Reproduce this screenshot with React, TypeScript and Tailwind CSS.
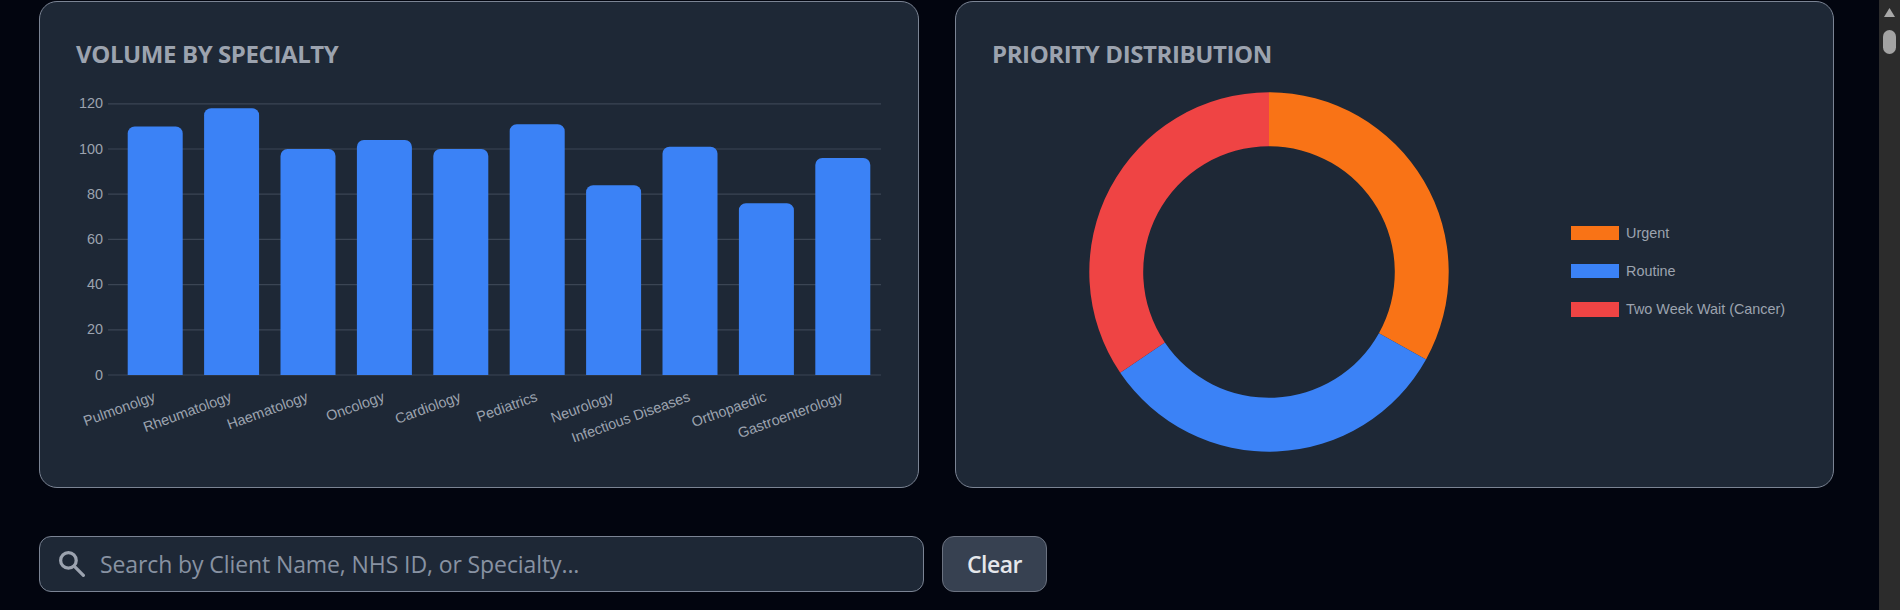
const bars = [
  { name: 'Pulmonolgy', value: 110 },
  { name: 'Rheumatology', value: 118 },
  { name: 'Haematology', value: 100 },
  { name: 'Oncology', value: 104 },
  { name: 'Cardiology', value: 100 },
  { name: 'Pediatrics', value: 111 },
  { name: 'Neurology', value: 84 },
  { name: 'Infectious Diseases', value: 101 },
  { name: 'Orthopaedic', value: 76 },
  { name: 'Gastroenterology', value: 96 },
];

const ticks = [0, 20, 40, 60, 80, 100, 120];

// coordinates inside the canvas-like svg, origin at the card's content box
const plotLeft = 41;
const plotRight = 805;
const plotBottom = 303;
const unit = 2.26;
const step = (plotRight - plotLeft) / bars.length;
const barWidth = 55;

function BarChart() {
  return (
    <svg width={810} height={370} className="block" style={{ fontFamily: '"Liberation Sans", Arial, sans-serif' }}>
      {ticks.map(t => {
        const y = plotBottom - t * unit;
        return (
          <g key={t}>
            <line x1={32} x2={plotRight} y1={y} y2={y} stroke="#3b4554" strokeWidth={1.2} />
            <text x={27} y={y + 4.5} textAnchor="end" fontSize={14.4} fill="#9ca3af">{t}</text>
          </g>
        );
      })}
      {bars.map((b, i) => {
        const cx = plotLeft + step * (i + 0.5);
        const x = cx - barWidth / 2;
        const top = plotBottom - b.value * unit;
        return (
          <g key={b.name}>
            <path
              d={`M${x} ${plotBottom}V${top + 7}a7 7 0 0 1 7 -7H${x + barWidth - 7}a7 7 0 0 1 7 7V${plotBottom}Z`}
              fill="#3b82f6"
            />
            <text
              textAnchor="end"
              fontSize={14.4}
              fill="#9ca3af"
              transform={`translate(${cx + 1} 328.5) rotate(-20)`}
            >
              {b.name}
            </text>
          </g>
        );
      })}
    </svg>
  );
}

function arc(start: number, end: number) {
  const R = 179.7;
  const r = 125.8;
  const c = 180;
  const pt = (rad: number, deg: number) => {
    const a = (deg * Math.PI) / 180;
    return `${(c + rad * Math.sin(a)).toFixed(2)} ${(c - rad * Math.cos(a)).toFixed(2)}`;
  };
  return `M${pt(R, start)}A${R} ${R} 0 0 1 ${pt(R, end)}L${pt(r, end)}A${r} ${r} 0 0 0 ${pt(r, start)}Z`;
}

const slices = [
  { label: 'Urgent', color: '#f97316', from: 0, to: 119.1 },
  { label: 'Routine', color: '#3b82f6', from: 119.1, to: 235.9 },
  { label: 'Two Week Wait (Cancer)', color: '#ef4444', from: 235.9, to: 360 },
];

function Card({ title, children }: { title: string; children: React.ReactNode }) {
  return (
    <div className="h-[487px] rounded-[18px] border border-[#7b8494] bg-[#1e2836] px-[36px] pt-[35px]">
      <h3 className="text-[24px] leading-[33px] font-bold uppercase tracking-[-0.4px] text-[#9ca3af]" style={{ fontFamily: '"Open Sans", sans-serif' }}>
        {title}
      </h3>
      {children}
    </div>
  );
}

export default function App() {
  return (
    <div className="flex h-screen overflow-hidden bg-[#02050f]" style={{ fontFamily: '"Open Sans", sans-serif' }}>
      <main className="min-w-0 flex-1 pt-px pl-[39px]">
        <div className="grid grid-cols-[880px_879px] gap-[36px]">
          <Card title="Volume by Specialty">
            <div className="mt-[2px]">
              <BarChart />
            </div>
          </Card>
          <Card title="Priority Distribution">
            <div className="-ml-[0.5px] flex items-start">
              <svg width={360} height={360} className="mt-[22px] ml-[97.7px] shrink-0">
                {slices.map(s => (
                  <path key={s.label} d={arc(s.from, s.to)} fill={s.color} />
                ))}
              </svg>
              <ul className="mt-[155.6px] ml-[121.8px] flex flex-col gap-[24px]" style={{ fontFamily: '"Liberation Sans", Arial, sans-serif' }}>
                {slices.map(s => (
                  <li key={s.label} className="flex h-[14.4px] items-center gap-[7px] text-[14.4px] leading-none whitespace-nowrap text-[#9ca3af]">
                    <span className="h-[14.4px] w-[48px] shrink-0" style={{ backgroundColor: s.color }} />
                    {s.label}
                  </li>
                ))}
              </ul>
            </div>
          </Card>
        </div>
        <div className="mt-[48px] flex items-stretch gap-[18px]">
          <div className="flex h-[56px] w-[885px] items-center rounded-[12px] border border-[#7b8494] bg-[#1e2836] pl-[19px]">
            <svg width={26} height={26} viewBox="0 0 24 24" fill="none" stroke="#9ca3af" strokeWidth={3} strokeLinecap="round" className="shrink-0">
              <circle cx="8.7" cy="8.7" r="7.2" />
              <line x1="14" y1="14" x2="22.5" y2="22.5" />
            </svg>
            <span className="ml-[15px] text-[23px] tracking-[-0.1px] text-[#8892a2]">Search by Client Name, NHS ID, or Specialty...</span>
          </div>
          <button className="h-[56px] w-[105px] rounded-[12px] border border-[#6b7280] bg-[#374151] text-[23px] font-semibold tracking-[-0.5px] text-[#e5e7eb]">
            Clear
          </button>
        </div>
      </main>
      <aside className="flex w-[21px] shrink-0 flex-col items-center bg-[#2c2c2c] pt-[8px]">
        <svg width={11} height={9} viewBox="0 0 11 9">
          <path d="M5.5 0L11 9H0Z" fill="#a8a8a8" />
        </svg>
        <div className="mt-[13px] h-[24px] w-[13px] rounded-full bg-[#a3a3a3]" />
      </aside>
    </div>
  );
}
